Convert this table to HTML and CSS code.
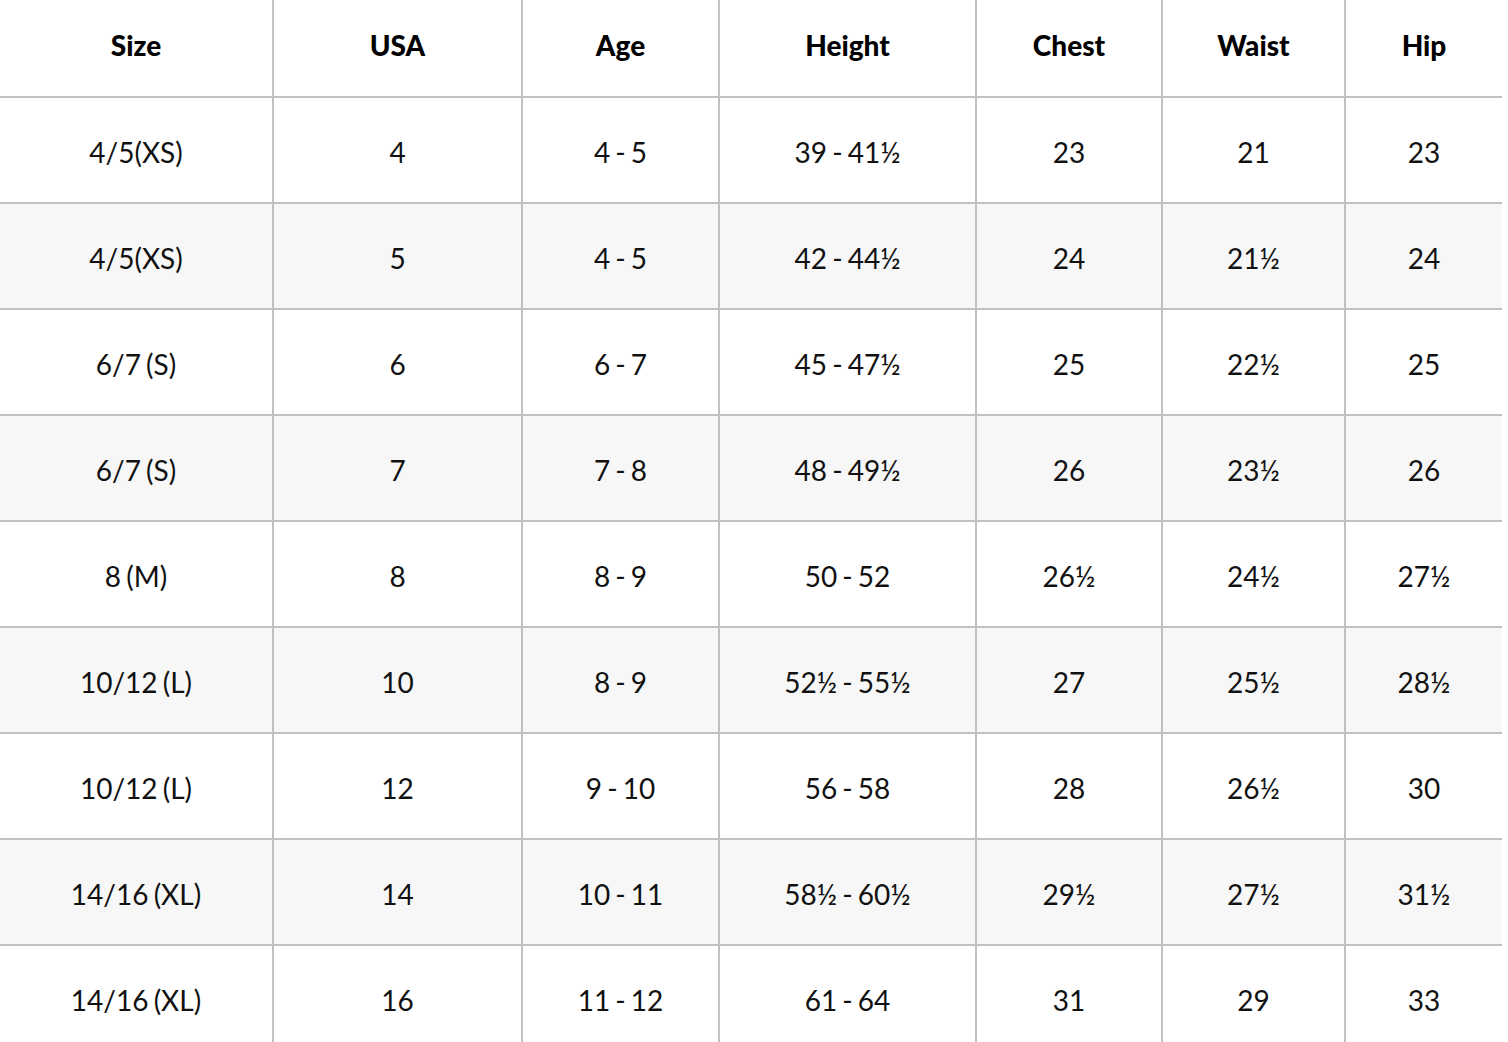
FILE: index.html
```html
<!DOCTYPE html>
<html>
<head>
<meta charset="utf-8">
<link rel="stylesheet" href="styles.css">
</head>
<body>
<table class="size-table">
  <colgroup>
    <col class="c1"><col class="c2"><col class="c3"><col class="c4"><col class="c5"><col class="c6"><col class="c7">
  </colgroup>
  <thead>
    <tr><th>Size</th><th>USA</th><th>Age</th><th>Height</th><th>Chest</th><th>Waist</th><th>Hip</th></tr>
  </thead>
  <tbody>
    <tr><td>4/5(XS)</td><td>4</td><td>4 - 5</td><td>39 - 41½</td><td>23</td><td>21</td><td>23</td></tr>
    <tr><td>4/5(XS)</td><td>5</td><td>4 - 5</td><td>42 - 44½</td><td>24</td><td>21½</td><td>24</td></tr>
    <tr><td>6/7 (S)</td><td>6</td><td>6 - 7</td><td>45 - 47½</td><td>25</td><td>22½</td><td>25</td></tr>
    <tr><td>6/7 (S)</td><td>7</td><td>7 - 8</td><td>48 - 49½</td><td>26</td><td>23½</td><td>26</td></tr>
    <tr><td>8 (M)</td><td>8</td><td>8 - 9</td><td>50 - 52</td><td>26½</td><td>24½</td><td>27½</td></tr>
    <tr><td>10/12 (L)</td><td>10</td><td>8 - 9</td><td>52½ - 55½</td><td>27</td><td>25½</td><td>28½</td></tr>
    <tr><td>10/12 (L)</td><td>12</td><td>9 - 10</td><td>56 - 58</td><td>28</td><td>26½</td><td>30</td></tr>
    <tr><td>14/16 (XL)</td><td>14</td><td>10 - 11</td><td>58½ - 60½</td><td>29½</td><td>27½</td><td>31½</td></tr>
    <tr><td>14/16 (XL)</td><td>16</td><td>11 - 12</td><td>61 - 64</td><td>31</td><td>29</td><td>33</td></tr>
  </tbody>
</table>
</body>
</html>
```

FILE: styles.css
```css
html, body {
  margin: 0;
  padding: 0;
  background: #ffffff;
}
body {
  font-family: "Lato", "Liberation Sans", sans-serif;
  color: #111111;
  overflow: hidden;
}
.size-table {
  width: 1502px;
  table-layout: fixed;
  border-collapse: collapse;
  border-spacing: 0;
}
.c1 { width: 273px; }
.c2 { width: 249px; }
.c3 { width: 197px; }
.c4 { width: 257px; }
.c5 { width: 186px; }
.c6 { width: 183px; }
.c7 { width: 157px; }
.size-table th,
.size-table td {
  text-align: center;
  vertical-align: middle;
  border-right: 2px solid #c1c1c5;
  border-bottom: 2px solid #c1c1c5;
  font-size: 28px;
  line-height: 1;
  word-spacing: -2px;
}
.size-table th:last-child,
.size-table td:last-child {
  border-right: none;
}
.size-table th {
  height: 90px;
  padding: 0 0 6px 0;
  font-weight: 900;
  color: #000;
}
.size-table td {
  height: 101px;
  padding: 3px 0 0 0;
  font-weight: 400;
}
.size-table tbody tr:nth-child(even) td {
  background: #f7f7f7;
}
```
